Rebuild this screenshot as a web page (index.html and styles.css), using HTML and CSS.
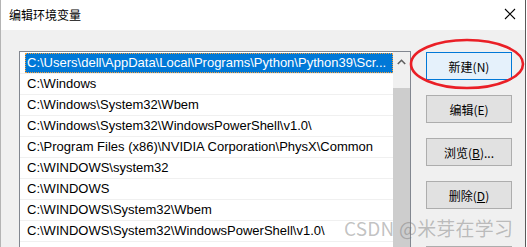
FILE: index.html
```html
<!DOCTYPE html>
<html lang="zh-CN">
<head>
    <meta charset="UTF-8">
    <title>编辑环境变量</title>
    <link rel="stylesheet" href="styles.css">
</head>
<body>
    <div class="window">
        <div class="titlebar">
            <span class="title">编辑环境变量</span>
            <svg class="close" width="12" height="12" viewBox="0 0 12 12">
                <path d="M1 1 L11 11 M11 1 L1 11" stroke="#000" stroke-width="1.1" fill="none"/>
            </svg>
        </div>

        <div class="content">
            <div class="listbox">
                <div class="rows">
                    <div class="row selected"><span class="cell">C:\Users\dell\AppData\Local\Programs\Python\Python39\Scr...</span></div>
                    <div class="row"><span class="cell">C:\Windows</span></div>
                    <div class="row"><span class="cell">C:\Windows\System32\Wbem</span></div>
                    <div class="row"><span class="cell">C:\Windows\System32\WindowsPowerShell\v1.0\</span></div>
                    <div class="row"><span class="cell">C:\Program Files (x86)\NVIDIA Corporation\PhysX\Common</span></div>
                    <div class="row"><span class="cell">C:\WINDOWS\system32</span></div>
                    <div class="row"><span class="cell">C:\WINDOWS</span></div>
                    <div class="row"><span class="cell">C:\WINDOWS\System32\Wbem</span></div>
                    <div class="row"><span class="cell">C:\WINDOWS\System32\WindowsPowerShell\v1.0\</span></div>
                </div>
                <div class="scrollbar">
                    <div class="arrow">
                        <svg width="9" height="6" viewBox="0 0 9 6">
                            <path d="M0.8 5 L4.5 1.3 L8.2 5" stroke="#606060" stroke-width="1.6" fill="none"/>
                        </svg>
                    </div>
                    <div class="thumb"></div>
                </div>
            </div>

            <div class="buttons">
                <div class="btn default">新建(N)</div>
                <div class="btn">编辑(E)</div>
                <div class="btn">浏览(<u>B</u>)...</div>
                <div class="btn">删除(<u>D</u>)</div>
                <div class="btn spaced"></div>
            </div>
        </div>

        <svg class="circle" width="116" height="52" viewBox="0 0 116 52">
            <ellipse cx="58" cy="26" rx="56" ry="24" stroke="#ea1f26" stroke-width="2.6" fill="none"/>
        </svg>
        <div class="watermark">CSDN @米芽在学习</div>
    </div>
</body>
</html>
```

FILE: styles.css
```css
* { margin: 0; padding: 0; box-sizing: border-box; }
body {
    width: 527px;
    height: 247px;
    overflow: hidden;
    background: #fff;
    font-family: "Liberation Sans", "Noto Sans CJK SC", sans-serif;
    color: #000;
}
.window {
    position: relative;
    width: 526px;
    height: 247px;
    overflow: hidden;
    background: #f0f0f0;
    border-left: 1px solid #b4b4b4;
    border-right: 1px solid #5a5a5a;
}
.titlebar {
    height: 30px;
    background: #fff;
    display: flex;
    align-items: center;
    justify-content: space-between;
    padding: 0 8px 0 8px;
}
.title {
    font-family: "Noto Sans CJK SC", sans-serif;
    font-size: 12px;
    margin-top: -1px;
}
.close { margin-right: 1px; margin-top: -2px; }
.content {
    display: flex;
    align-items: flex-start;
    padding: 21px 0 0 18px;
}
.listbox {
    width: 392px;
    height: 196px;
    border: 1px solid #828790;
    border-bottom: none;
    background: #fff;
    display: flex;
}
.rows {
    width: 373px;
    padding-top: 1px;
}
.row {
    height: 21px;
    border-bottom: 1px solid #f0f0f0;
    padding-left: 5px;
}
.cell {
    display: block;
    height: 20px;
    line-height: 20px;
    padding-left: 2px;
    font-size: 13px;
    white-space: nowrap;
    overflow: hidden;
}
.selected .cell {
    background: #0078d7;
    color: #fff;
    outline: 1px dotted #f7a23c;
    outline-offset: -1px;
}
.scrollbar {
    width: 17px;
    background: #f0f0f0;
    display: flex;
    flex-direction: column;
}
.arrow {
    height: 36px;
    display: flex;
    justify-content: center;
    padding-top: 7px;
}
.thumb {
    flex: 1;
    background: #cdcdcd;
}
.buttons {
    display: flex;
    flex-direction: column;
    gap: 15px;
    margin-left: 15px;
    margin-top: 1px;
}
.btn {
    width: 86px;
    height: 28px;
    border: 1px solid #adadad;
    background: #e1e1e1;
    display: flex;
    align-items: center;
    justify-content: center;
    font-family: "Noto Sans CJK SC", sans-serif;
    font-size: 12px;
}
.btn.default {
    border-color: #0078d7;
    background: #e5f1fb;
}
.btn.spaced { margin-top: 22px; }
.circle {
    position: absolute;
    left: 408px;
    top: 38px;
}
.watermark {
    position: absolute;
    left: 343px;
    top: 214px;
    font-family: "Noto Sans CJK SC", sans-serif;
    font-size: 19px;
    letter-spacing: 0.2px;
    color: rgba(120, 120, 120, 0.45);
    white-space: nowrap;
}
```
